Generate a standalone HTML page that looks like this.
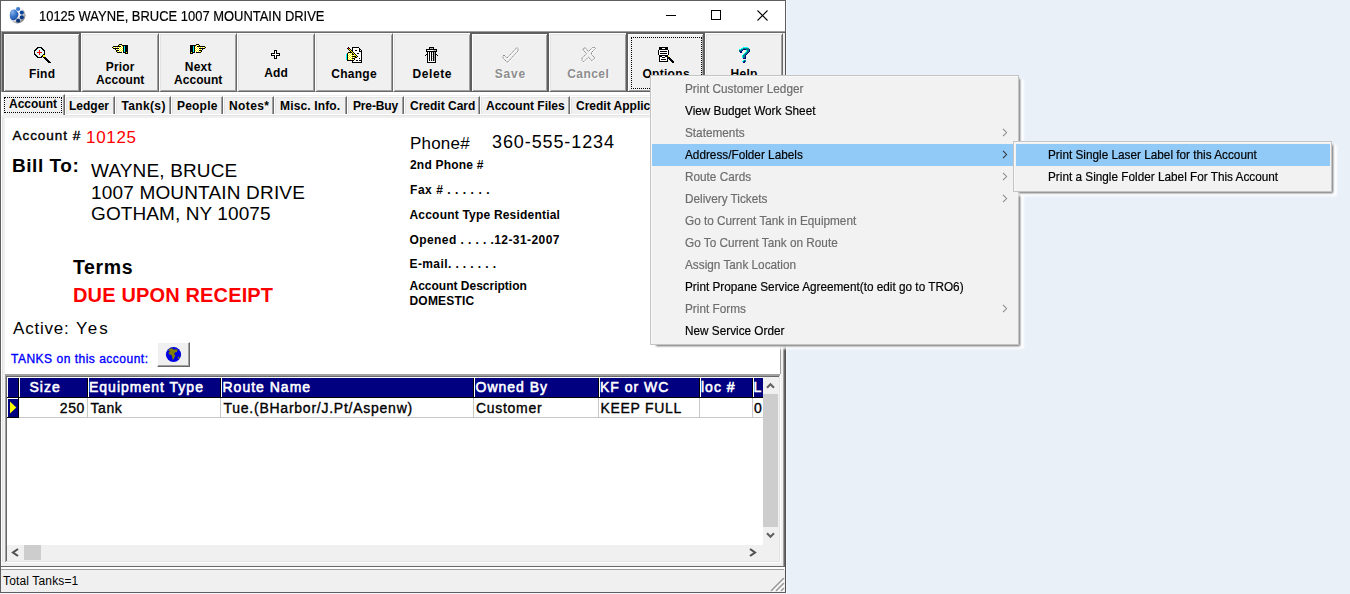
<!DOCTYPE html><html><head><meta charset="utf-8"><style>
*{margin:0;padding:0;box-sizing:border-box}
html,body{width:1350px;height:594px;overflow:hidden;background:#eaf0f8;font-family:"Liberation Sans",sans-serif}
.t{position:absolute;white-space:nowrap;font-family:"Liberation Sans",sans-serif}
.r{position:absolute}
svg{position:absolute;overflow:visible}
</style></head><body>
<div class="r" style="left:0px;top:0px;width:786px;height:593px;background:#f0f0f0;border:1px solid #5f5f5f;"></div>
<div class="r" style="left:1px;top:1px;width:784px;height:30px;background:#fff;"></div>
<div class="r" style="left:1px;top:31px;width:784px;height:1px;background:#a0a0a0;"></div>
<svg style="left:7px;top:5px" width="20" height="20" viewBox="0 0 20 20">
<defs>
<radialGradient id="gbg" cx="30%" cy="28%" r="80%"><stop offset="0" stop-color="#ffffff"/><stop offset="0.62" stop-color="#f4f4f4"/><stop offset="0.85" stop-color="#a8a8a8"/><stop offset="1" stop-color="#707070"/></radialGradient>
<radialGradient id="gbl" cx="30%" cy="25%" r="80%"><stop offset="0" stop-color="#8ab4ea"/><stop offset="0.5" stop-color="#3c78cc"/><stop offset="1" stop-color="#1a4fa6"/></radialGradient>
</defs>
<circle cx="10.3" cy="10.3" r="8.2" fill="url(#gbg)"/>
<path d="M3.2 7 C3.8 5 5.5 4.3 7.5 4.4 C9 4.6 10 5.8 11.2 8 C11.6 9.2 11.6 10.3 11.1 11.3 C10.2 13.2 9 14.8 7 15.2 C5 15.5 3.4 14.2 3 12.2 C2.8 10.5 2.8 8.8 3.2 7 Z" fill="url(#gbl)"/>
<circle cx="11.1" cy="4" r="2.1" fill="#3f7ccc"/>
<circle cx="14.8" cy="7.6" r="2.1" fill="#0e48a0"/>
<circle cx="14.8" cy="12.3" r="2.1" fill="#0b3a86"/>
<circle cx="11.1" cy="15.7" r="2.1" fill="#0d3476"/>
</svg>
<div class="t " style="left:39px;top:9.15px;font-size:14px;line-height:14px;font-weight:normal;color:#000;transform:scaleX(0.925);transform-origin:0 0;-webkit-text-stroke:0.2px #000;">10125 WAYNE, BRUCE 1007 MOUNTAIN DRIVE</div>
<div class="r" style="left:666px;top:15px;width:10px;height:1px;background:#000;"></div>
<div class="r" style="left:711px;top:10px;width:10px;height:10px;border:1px solid #000;"></div>
<svg style="left:757px;top:10px" width="11" height="11" viewBox="0 0 11 11"><path d="M0.5 0.5L10.5 10.5M10.5 0.5L0.5 10.5" stroke="#000" stroke-width="1.1"/></svg>
<div class="r" style="left:1px;top:32px;width:784px;height:1px;background:#696969;"></div>
<div class="r" style="left:1px;top:32px;width:1px;height:60px;background:#a0a0a0;"></div>
<div class="r" style="left:2px;top:32px;width:79px;height:60px;background:#f0f0f0;border-style:solid;border-color:#5f5f5f;border-width:2px 2px 1px 2px;box-shadow:inset 1px 1px #fff, inset -1px -1px #a0a0a0;"></div>
<div class="t " style="left:42.1px;top:67.84px;font-size:12px;line-height:12px;font-weight:bold;color:#000;letter-spacing:0.2px;transform:translateX(-50%);">Find</div>
<div class="r" style="left:81px;top:33px;width:78px;height:59px;background:#f0f0f0;border-style:solid;border-width:1px;border-color:#fff #696969 #696969 #fff;box-shadow:inset 1px 1px #e3e3e3, inset -1px -1px #a0a0a0;"></div>
<div class="t " style="left:120.2px;top:60.84px;font-size:12px;line-height:12px;font-weight:bold;color:#000;letter-spacing:0.2px;transform:translateX(-50%);">Prior</div>
<div class="t " style="left:120.2px;top:73.84px;font-size:12px;line-height:12px;font-weight:bold;color:#000;letter-spacing:0.05px;transform:translateX(-50%);">Account</div>
<div class="r" style="left:159px;top:33px;width:78px;height:59px;background:#f0f0f0;border-style:solid;border-width:1px;border-color:#fff #696969 #696969 #fff;box-shadow:inset 1px 1px #e3e3e3, inset -1px -1px #a0a0a0;"></div>
<div class="t " style="left:198.2px;top:60.84px;font-size:12px;line-height:12px;font-weight:bold;color:#000;letter-spacing:0.2px;transform:translateX(-50%);">Next</div>
<div class="t " style="left:198.2px;top:73.84px;font-size:12px;line-height:12px;font-weight:bold;color:#000;letter-spacing:0.05px;transform:translateX(-50%);">Account</div>
<div class="r" style="left:237px;top:33px;width:78px;height:59px;background:#f0f0f0;border-style:solid;border-width:1px;border-color:#fff #696969 #696969 #fff;box-shadow:inset 1px 1px #e3e3e3, inset -1px -1px #a0a0a0;"></div>
<div class="t " style="left:276.1px;top:66.84px;font-size:12px;line-height:12px;font-weight:bold;color:#000;letter-spacing:0.2px;transform:translateX(-50%);">Add</div>
<div class="r" style="left:315px;top:33px;width:78px;height:59px;background:#f0f0f0;border-style:solid;border-width:1px;border-color:#fff #696969 #696969 #fff;box-shadow:inset 1px 1px #e3e3e3, inset -1px -1px #a0a0a0;"></div>
<div class="t " style="left:354.125px;top:67.84px;font-size:12px;line-height:12px;font-weight:bold;color:#000;letter-spacing:0.25px;transform:translateX(-50%);">Change</div>
<div class="r" style="left:393px;top:33px;width:78px;height:59px;background:#f0f0f0;border-style:solid;border-width:1px;border-color:#fff #696969 #696969 #fff;box-shadow:inset 1px 1px #e3e3e3, inset -1px -1px #a0a0a0;"></div>
<div class="t " style="left:432.275px;top:67.84px;font-size:12px;line-height:12px;font-weight:bold;color:#000;letter-spacing:0.55px;transform:translateX(-50%);">Delete</div>
<div class="r" style="left:470px;top:32px;width:79px;height:60px;background:#f0f0f0;border-style:solid;border-color:#5f5f5f;border-width:2px 2px 1px 2px;box-shadow:inset 1px 1px #fff, inset -1px -1px #a0a0a0;"></div>
<div class="t " style="left:510.4px;top:67.84px;font-size:12px;line-height:12px;font-weight:bold;color:#8d8d8d;letter-spacing:0.8px;transform:translateX(-50%);text-shadow:1px 1px 0 #fff;">Save</div>
<div class="r" style="left:549px;top:33px;width:78px;height:59px;background:#f0f0f0;border-style:solid;border-width:1px;border-color:#fff #696969 #696969 #fff;box-shadow:inset 1px 1px #e3e3e3, inset -1px -1px #a0a0a0;"></div>
<div class="t " style="left:588.225px;top:67.84px;font-size:12px;line-height:12px;font-weight:bold;color:#8d8d8d;letter-spacing:0.45px;transform:translateX(-50%);text-shadow:1px 1px 0 #fff;">Cancel</div>
<div class="r" style="left:626px;top:32px;width:79px;height:60px;background:#f0f0f0;border-style:solid;border-color:#5f5f5f;border-width:2px 2px 1px 2px;box-shadow:inset 1px 1px #fff, inset -1px -1px #a0a0a0;"></div>
<div class="t " style="left:666.15px;top:67.84px;font-size:12px;line-height:12px;font-weight:bold;color:#000;letter-spacing:0.3px;transform:translateX(-50%);">Options</div>
<div class="r" style="left:705px;top:33px;width:78px;height:59px;background:#f0f0f0;border-style:solid;border-width:1px;border-color:#fff #696969 #696969 #fff;box-shadow:inset 1px 1px #e3e3e3, inset -1px -1px #a0a0a0;"></div>
<div class="t " style="left:744.15px;top:67.84px;font-size:12px;line-height:12px;font-weight:bold;color:#000;letter-spacing:0.3px;transform:translateX(-50%);">Help</div>
<svg style="left:32px;top:44px" width="19" height="19" shape-rendering="crispEdges"><rect x="5" y="3" width="5" height="1" fill="#000"/><rect x="4" y="4" width="2" height="1" fill="#000"/><rect x="6" y="4" width="3" height="1" fill="#dff4f4"/><rect x="9" y="4" width="2" height="1" fill="#000"/><rect x="3" y="5" width="2" height="1" fill="#000"/><rect x="5" y="5" width="5" height="1" fill="#dff4f4"/><rect x="10" y="5" width="2" height="1" fill="#000"/><rect x="2" y="6" width="2" height="1" fill="#000"/><rect x="4" y="6" width="3" height="1" fill="#dff4f4"/><rect x="7" y="6" width="1" height="1" fill="#f00"/><rect x="8" y="6" width="3" height="1" fill="#dff4f4"/><rect x="11" y="6" width="2" height="1" fill="#000"/><rect x="2" y="7" width="1" height="1" fill="#000"/><rect x="3" y="7" width="4" height="1" fill="#dff4f4"/><rect x="7" y="7" width="1" height="1" fill="#f00"/><rect x="8" y="7" width="4" height="1" fill="#dff4f4"/><rect x="12" y="7" width="1" height="1" fill="#000"/><rect x="2" y="8" width="1" height="1" fill="#000"/><rect x="3" y="8" width="2" height="1" fill="#dff4f4"/><rect x="5" y="8" width="5" height="1" fill="#f00"/><rect x="10" y="8" width="2" height="1" fill="#dff4f4"/><rect x="12" y="8" width="1" height="1" fill="#000"/><rect x="2" y="9" width="1" height="1" fill="#000"/><rect x="3" y="9" width="4" height="1" fill="#dff4f4"/><rect x="7" y="9" width="1" height="1" fill="#f00"/><rect x="8" y="9" width="4" height="1" fill="#dff4f4"/><rect x="12" y="9" width="1" height="1" fill="#000"/><rect x="2" y="10" width="2" height="1" fill="#000"/><rect x="4" y="10" width="3" height="1" fill="#dff4f4"/><rect x="7" y="10" width="1" height="1" fill="#f00"/><rect x="8" y="10" width="3" height="1" fill="#dff4f4"/><rect x="11" y="10" width="2" height="1" fill="#000"/><rect x="3" y="11" width="2" height="1" fill="#000"/><rect x="5" y="11" width="5" height="1" fill="#dff4f4"/><rect x="10" y="11" width="1" height="1" fill="#000"/><rect x="11" y="11" width="2" height="1" fill="#ff0"/><rect x="4" y="12" width="2" height="1" fill="#000"/><rect x="6" y="12" width="3" height="1" fill="#dff4f4"/><rect x="9" y="12" width="2" height="1" fill="#000"/><rect x="11" y="12" width="2" height="1" fill="#ff0"/><rect x="5" y="13" width="5" height="1" fill="#000"/><rect x="11" y="13" width="3" height="1" fill="#000"/><rect x="12" y="14" width="3" height="1" fill="#000"/><rect x="13" y="15" width="3" height="1" fill="#000"/><rect x="14" y="16" width="3" height="1" fill="#000"/><rect x="15" y="17" width="3" height="1" fill="#000"/><rect x="16" y="18" width="3" height="1" fill="#000"/></svg>
<svg style="left:110px;top:42px" width="18" height="12" shape-rendering="crispEdges"><rect x="9" y="2" width="3" height="1" fill="#000"/><rect x="8" y="3" width="1" height="1" fill="#000"/><rect x="9" y="3" width="1" height="1" fill="#ff0"/><rect x="10" y="3" width="1" height="1" fill="#fff"/><rect x="11" y="3" width="1" height="1" fill="#ff0"/><rect x="12" y="3" width="6" height="1" fill="#000"/><rect x="3" y="4" width="8" height="1" fill="#000"/><rect x="11" y="4" width="1" height="1" fill="#fff"/><rect x="12" y="4" width="1" height="1" fill="#ff0"/><rect x="13" y="4" width="1" height="1" fill="#000"/><rect x="14" y="4" width="1" height="1" fill="#0ff"/><rect x="15" y="4" width="3" height="1" fill="#000"/><rect x="2" y="5" width="1" height="1" fill="#000"/><rect x="3" y="5" width="1" height="1" fill="#ff0"/><rect x="4" y="5" width="1" height="1" fill="#fff"/><rect x="5" y="5" width="1" height="1" fill="#ff0"/><rect x="6" y="5" width="1" height="1" fill="#fff"/><rect x="7" y="5" width="1" height="1" fill="#ff0"/><rect x="8" y="5" width="1" height="1" fill="#fff"/><rect x="9" y="5" width="1" height="1" fill="#ff0"/><rect x="10" y="5" width="1" height="1" fill="#fff"/><rect x="11" y="5" width="1" height="1" fill="#ff0"/><rect x="12" y="5" width="1" height="1" fill="#fff"/><rect x="13" y="5" width="1" height="1" fill="#000"/><rect x="14" y="5" width="1" height="1" fill="#0ff"/><rect x="15" y="5" width="3" height="1" fill="#000"/><rect x="3" y="6" width="6" height="1" fill="#000"/><rect x="9" y="6" width="1" height="1" fill="#fff"/><rect x="10" y="6" width="1" height="1" fill="#ff0"/><rect x="11" y="6" width="1" height="1" fill="#fff"/><rect x="12" y="6" width="1" height="1" fill="#ff0"/><rect x="13" y="6" width="1" height="1" fill="#000"/><rect x="14" y="6" width="1" height="1" fill="#0ff"/><rect x="15" y="6" width="3" height="1" fill="#000"/><rect x="5" y="7" width="1" height="1" fill="#000"/><rect x="6" y="7" width="1" height="1" fill="#fff"/><rect x="7" y="7" width="1" height="1" fill="#ff0"/><rect x="8" y="7" width="1" height="1" fill="#fff"/><rect x="9" y="7" width="1" height="1" fill="#ff0"/><rect x="10" y="7" width="1" height="1" fill="#fff"/><rect x="11" y="7" width="1" height="1" fill="#ff0"/><rect x="12" y="7" width="1" height="1" fill="#fff"/><rect x="13" y="7" width="1" height="1" fill="#000"/><rect x="14" y="7" width="1" height="1" fill="#0ff"/><rect x="15" y="7" width="3" height="1" fill="#000"/><rect x="6" y="8" width="3" height="1" fill="#000"/><rect x="9" y="8" width="1" height="1" fill="#fff"/><rect x="10" y="8" width="1" height="1" fill="#ff0"/><rect x="11" y="8" width="1" height="1" fill="#fff"/><rect x="12" y="8" width="1" height="1" fill="#ff0"/><rect x="13" y="8" width="1" height="1" fill="#000"/><rect x="14" y="8" width="1" height="1" fill="#0ff"/><rect x="15" y="8" width="3" height="1" fill="#000"/><rect x="6" y="9" width="1" height="1" fill="#000"/><rect x="7" y="9" width="1" height="1" fill="#ff0"/><rect x="8" y="9" width="1" height="1" fill="#fff"/><rect x="9" y="9" width="1" height="1" fill="#ff0"/><rect x="10" y="9" width="1" height="1" fill="#fff"/><rect x="11" y="9" width="1" height="1" fill="#ff0"/><rect x="12" y="9" width="1" height="1" fill="#fff"/><rect x="13" y="9" width="1" height="1" fill="#000"/><rect x="14" y="9" width="1" height="1" fill="#0ff"/><rect x="15" y="9" width="3" height="1" fill="#000"/><rect x="7" y="10" width="5" height="1" fill="#000"/><rect x="13" y="10" width="3" height="1" fill="#000"/><rect x="16" y="10" width="1" height="1" fill="#ff0"/><rect x="17" y="10" width="1" height="1" fill="#000"/><rect x="15" y="11" width="3" height="1" fill="#000"/></svg>
<svg style="left:190px;top:42px" width="18" height="12" shape-rendering="crispEdges"><rect x="6" y="2" width="3" height="1" fill="#000"/><rect x="9" y="3" width="1" height="1" fill="#000"/><rect x="8" y="3" width="1" height="1" fill="#ff0"/><rect x="7" y="3" width="1" height="1" fill="#fff"/><rect x="6" y="3" width="1" height="1" fill="#ff0"/><rect x="0" y="3" width="6" height="1" fill="#000"/><rect x="7" y="4" width="8" height="1" fill="#000"/><rect x="6" y="4" width="1" height="1" fill="#fff"/><rect x="5" y="4" width="1" height="1" fill="#ff0"/><rect x="4" y="4" width="1" height="1" fill="#000"/><rect x="3" y="4" width="1" height="1" fill="#0ff"/><rect x="0" y="4" width="3" height="1" fill="#000"/><rect x="15" y="5" width="1" height="1" fill="#000"/><rect x="14" y="5" width="1" height="1" fill="#ff0"/><rect x="13" y="5" width="1" height="1" fill="#fff"/><rect x="12" y="5" width="1" height="1" fill="#ff0"/><rect x="11" y="5" width="1" height="1" fill="#fff"/><rect x="10" y="5" width="1" height="1" fill="#ff0"/><rect x="9" y="5" width="1" height="1" fill="#fff"/><rect x="8" y="5" width="1" height="1" fill="#ff0"/><rect x="7" y="5" width="1" height="1" fill="#fff"/><rect x="6" y="5" width="1" height="1" fill="#ff0"/><rect x="5" y="5" width="1" height="1" fill="#fff"/><rect x="4" y="5" width="1" height="1" fill="#000"/><rect x="3" y="5" width="1" height="1" fill="#0ff"/><rect x="0" y="5" width="3" height="1" fill="#000"/><rect x="9" y="6" width="6" height="1" fill="#000"/><rect x="8" y="6" width="1" height="1" fill="#fff"/><rect x="7" y="6" width="1" height="1" fill="#ff0"/><rect x="6" y="6" width="1" height="1" fill="#fff"/><rect x="5" y="6" width="1" height="1" fill="#ff0"/><rect x="4" y="6" width="1" height="1" fill="#000"/><rect x="3" y="6" width="1" height="1" fill="#0ff"/><rect x="0" y="6" width="3" height="1" fill="#000"/><rect x="12" y="7" width="1" height="1" fill="#000"/><rect x="11" y="7" width="1" height="1" fill="#fff"/><rect x="10" y="7" width="1" height="1" fill="#ff0"/><rect x="9" y="7" width="1" height="1" fill="#fff"/><rect x="8" y="7" width="1" height="1" fill="#ff0"/><rect x="7" y="7" width="1" height="1" fill="#fff"/><rect x="6" y="7" width="1" height="1" fill="#ff0"/><rect x="5" y="7" width="1" height="1" fill="#fff"/><rect x="4" y="7" width="1" height="1" fill="#000"/><rect x="3" y="7" width="1" height="1" fill="#0ff"/><rect x="0" y="7" width="3" height="1" fill="#000"/><rect x="9" y="8" width="3" height="1" fill="#000"/><rect x="8" y="8" width="1" height="1" fill="#fff"/><rect x="7" y="8" width="1" height="1" fill="#ff0"/><rect x="6" y="8" width="1" height="1" fill="#fff"/><rect x="5" y="8" width="1" height="1" fill="#ff0"/><rect x="4" y="8" width="1" height="1" fill="#000"/><rect x="3" y="8" width="1" height="1" fill="#0ff"/><rect x="0" y="8" width="3" height="1" fill="#000"/><rect x="11" y="9" width="1" height="1" fill="#000"/><rect x="10" y="9" width="1" height="1" fill="#ff0"/><rect x="9" y="9" width="1" height="1" fill="#fff"/><rect x="8" y="9" width="1" height="1" fill="#ff0"/><rect x="7" y="9" width="1" height="1" fill="#fff"/><rect x="6" y="9" width="1" height="1" fill="#ff0"/><rect x="5" y="9" width="1" height="1" fill="#fff"/><rect x="4" y="9" width="1" height="1" fill="#000"/><rect x="3" y="9" width="1" height="1" fill="#0ff"/><rect x="0" y="9" width="3" height="1" fill="#000"/><rect x="6" y="10" width="5" height="1" fill="#000"/><rect x="2" y="10" width="3" height="1" fill="#000"/><rect x="1" y="10" width="1" height="1" fill="#ff0"/><rect x="0" y="10" width="1" height="1" fill="#000"/><rect x="0" y="11" width="3" height="1" fill="#000"/></svg>
<svg style="left:271px;top:50px" width="9" height="9" shape-rendering="crispEdges"><rect x="3" y="0" width="3" height="1" fill="#000"/><rect x="3" y="1" width="1" height="1" fill="#000"/><rect x="4" y="1" width="1" height="1" fill="#fff"/><rect x="5" y="1" width="1" height="1" fill="#000"/><rect x="3" y="2" width="1" height="1" fill="#000"/><rect x="4" y="2" width="1" height="1" fill="#fff"/><rect x="5" y="2" width="1" height="1" fill="#000"/><rect x="0" y="3" width="4" height="1" fill="#000"/><rect x="4" y="3" width="1" height="1" fill="#fff"/><rect x="5" y="3" width="4" height="1" fill="#000"/><rect x="0" y="4" width="1" height="1" fill="#000"/><rect x="1" y="4" width="7" height="1" fill="#fff"/><rect x="8" y="4" width="1" height="1" fill="#000"/><rect x="0" y="5" width="4" height="1" fill="#000"/><rect x="4" y="5" width="1" height="1" fill="#fff"/><rect x="5" y="5" width="4" height="1" fill="#000"/><rect x="3" y="6" width="1" height="1" fill="#000"/><rect x="4" y="6" width="1" height="1" fill="#fff"/><rect x="5" y="6" width="1" height="1" fill="#000"/><rect x="3" y="7" width="1" height="1" fill="#000"/><rect x="4" y="7" width="1" height="1" fill="#fff"/><rect x="5" y="7" width="1" height="1" fill="#000"/><rect x="3" y="8" width="3" height="1" fill="#000"/></svg>
<svg style="left:344px;top:45px" width="19" height="18" shape-rendering="crispEdges"><rect x="4" y="2" width="1" height="1" fill="#000"/><rect x="8" y="2" width="7" height="1" fill="#000"/><rect x="3" y="3" width="1" height="1" fill="#000"/><rect x="4" y="3" width="1" height="1" fill="#f00"/><rect x="5" y="3" width="1" height="1" fill="#000"/><rect x="8" y="3" width="1" height="1" fill="#000"/><rect x="9" y="3" width="6" height="1" fill="#fff"/><rect x="15" y="3" width="1" height="1" fill="#000"/><rect x="4" y="4" width="1" height="1" fill="#000"/><rect x="5" y="4" width="1" height="1" fill="#ff0"/><rect x="6" y="4" width="1" height="1" fill="#000"/><rect x="8" y="4" width="1" height="1" fill="#000"/><rect x="9" y="4" width="6" height="1" fill="#fff"/><rect x="15" y="4" width="2" height="1" fill="#000"/><rect x="5" y="5" width="1" height="1" fill="#000"/><rect x="6" y="5" width="1" height="1" fill="#ff0"/><rect x="7" y="5" width="2" height="1" fill="#000"/><rect x="9" y="5" width="2" height="1" fill="#fff"/><rect x="11" y="5" width="2" height="1" fill="#000"/><rect x="13" y="5" width="2" height="1" fill="#fff"/><rect x="15" y="5" width="1" height="1" fill="#000"/><rect x="16" y="5" width="1" height="1" fill="#fff"/><rect x="17" y="5" width="1" height="1" fill="#000"/><rect x="6" y="6" width="1" height="1" fill="#000"/><rect x="7" y="6" width="1" height="1" fill="#ff0"/><rect x="8" y="6" width="1" height="1" fill="#000"/><rect x="9" y="6" width="6" height="1" fill="#fff"/><rect x="15" y="6" width="3" height="1" fill="#000"/><rect x="4" y="7" width="4" height="1" fill="#000"/><rect x="8" y="7" width="1" height="1" fill="#ff0"/><rect x="9" y="7" width="1" height="1" fill="#000"/><rect x="10" y="7" width="7" height="1" fill="#fff"/><rect x="17" y="7" width="1" height="1" fill="#000"/><rect x="3" y="8" width="1" height="1" fill="#000"/><rect x="4" y="8" width="1" height="1" fill="#ff0"/><rect x="5" y="8" width="1" height="1" fill="#fff"/><rect x="6" y="8" width="1" height="1" fill="#ff0"/><rect x="7" y="8" width="1" height="1" fill="#fff"/><rect x="8" y="8" width="1" height="1" fill="#000"/><rect x="9" y="8" width="1" height="1" fill="#ff0"/><rect x="10" y="8" width="1" height="1" fill="#000"/><rect x="11" y="8" width="2" height="1" fill="#fff"/><rect x="13" y="8" width="2" height="1" fill="#000"/><rect x="15" y="8" width="2" height="1" fill="#fff"/><rect x="17" y="8" width="1" height="1" fill="#000"/><rect x="2" y="9" width="1" height="1" fill="#0ff"/><rect x="3" y="9" width="1" height="1" fill="#000"/><rect x="4" y="9" width="1" height="1" fill="#fff"/><rect x="5" y="9" width="1" height="1" fill="#ff0"/><rect x="6" y="9" width="1" height="1" fill="#fff"/><rect x="7" y="9" width="1" height="1" fill="#ff0"/><rect x="8" y="9" width="2" height="1" fill="#000"/><rect x="10" y="9" width="1" height="1" fill="#ff0"/><rect x="11" y="9" width="1" height="1" fill="#000"/><rect x="12" y="9" width="5" height="1" fill="#fff"/><rect x="17" y="9" width="1" height="1" fill="#000"/><rect x="2" y="10" width="1" height="1" fill="#0ff"/><rect x="3" y="10" width="1" height="1" fill="#000"/><rect x="4" y="10" width="1" height="1" fill="#ff0"/><rect x="5" y="10" width="1" height="1" fill="#fff"/><rect x="6" y="10" width="1" height="1" fill="#ff0"/><rect x="7" y="10" width="1" height="1" fill="#fff"/><rect x="8" y="10" width="1" height="1" fill="#ff0"/><rect x="9" y="10" width="1" height="1" fill="#fff"/><rect x="10" y="10" width="1" height="1" fill="#ff0"/><rect x="11" y="10" width="1" height="1" fill="#ff0"/><rect x="12" y="10" width="1" height="1" fill="#000"/><rect x="13" y="10" width="4" height="1" fill="#fff"/><rect x="17" y="10" width="1" height="1" fill="#000"/><rect x="2" y="11" width="1" height="1" fill="#0ff"/><rect x="3" y="11" width="1" height="1" fill="#000"/><rect x="4" y="11" width="1" height="1" fill="#fff"/><rect x="5" y="11" width="1" height="1" fill="#ff0"/><rect x="6" y="11" width="1" height="1" fill="#fff"/><rect x="7" y="11" width="1" height="1" fill="#ff0"/><rect x="8" y="11" width="4" height="1" fill="#000"/><rect x="12" y="11" width="1" height="1" fill="#ff0"/><rect x="13" y="11" width="1" height="1" fill="#000"/><rect x="14" y="11" width="3" height="1" fill="#fff"/><rect x="17" y="11" width="1" height="1" fill="#000"/><rect x="2" y="12" width="1" height="1" fill="#0ff"/><rect x="3" y="12" width="1" height="1" fill="#000"/><rect x="4" y="12" width="1" height="1" fill="#ff0"/><rect x="5" y="12" width="1" height="1" fill="#fff"/><rect x="6" y="12" width="1" height="1" fill="#ff0"/><rect x="7" y="12" width="1" height="1" fill="#fff"/><rect x="8" y="12" width="1" height="1" fill="#ff0"/><rect x="9" y="12" width="1" height="1" fill="#fff"/><rect x="10" y="12" width="1" height="1" fill="#ff0"/><rect x="11" y="12" width="2" height="1" fill="#000"/><rect x="13" y="12" width="4" height="1" fill="#fff"/><rect x="17" y="12" width="1" height="1" fill="#000"/><rect x="2" y="13" width="1" height="1" fill="#0ff"/><rect x="3" y="13" width="1" height="1" fill="#000"/><rect x="4" y="13" width="1" height="1" fill="#fff"/><rect x="5" y="13" width="1" height="1" fill="#ff0"/><rect x="6" y="13" width="1" height="1" fill="#fff"/><rect x="7" y="13" width="1" height="1" fill="#ff0"/><rect x="8" y="13" width="3" height="1" fill="#000"/><rect x="11" y="13" width="4" height="1" fill="#fff"/><rect x="15" y="13" width="1" height="1" fill="#000"/><rect x="16" y="13" width="1" height="1" fill="#fff"/><rect x="17" y="13" width="1" height="1" fill="#000"/><rect x="2" y="14" width="1" height="1" fill="#0ff"/><rect x="3" y="14" width="1" height="1" fill="#000"/><rect x="4" y="14" width="1" height="1" fill="#ff0"/><rect x="5" y="14" width="1" height="1" fill="#fff"/><rect x="6" y="14" width="1" height="1" fill="#ff0"/><rect x="7" y="14" width="1" height="1" fill="#fff"/><rect x="8" y="14" width="1" height="1" fill="#ff0"/><rect x="9" y="14" width="1" height="1" fill="#fff"/><rect x="10" y="14" width="1" height="1" fill="#000"/><rect x="11" y="14" width="6" height="1" fill="#fff"/><rect x="17" y="14" width="1" height="1" fill="#000"/><rect x="3" y="15" width="7" height="1" fill="#000"/><rect x="10" y="15" width="2" height="1" fill="#fff"/><rect x="12" y="15" width="2" height="1" fill="#000"/><rect x="14" y="15" width="1" height="1" fill="#fff"/><rect x="15" y="15" width="3" height="1" fill="#000"/><rect x="8" y="16" width="1" height="1" fill="#000"/><rect x="9" y="16" width="8" height="1" fill="#fff"/><rect x="17" y="16" width="1" height="1" fill="#000"/><rect x="8" y="17" width="10" height="1" fill="#000"/></svg>
<svg style="left:421px;top:44px" width="20" height="19" shape-rendering="crispEdges"><rect x="8" y="3" width="5" height="1" fill="#000"/><rect x="8" y="4" width="1" height="1" fill="#000"/><rect x="9" y="4" width="1" height="1" fill="#c8c8c8"/><rect x="10" y="4" width="1" height="1" fill="#a0a0a0"/><rect x="11" y="4" width="1" height="1" fill="#c8c8c8"/><rect x="12" y="4" width="1" height="1" fill="#000"/><rect x="5" y="5" width="11" height="1" fill="#000"/><rect x="5" y="6" width="1" height="1" fill="#000"/><rect x="6" y="6" width="6" height="1" fill="#fff"/><rect x="12" y="6" width="1" height="1" fill="#c8c8c8"/><rect x="13" y="6" width="1" height="1" fill="#a0a0a0"/><rect x="14" y="6" width="1" height="1" fill="#c8c8c8"/><rect x="15" y="6" width="1" height="1" fill="#000"/><rect x="5" y="7" width="11" height="1" fill="#000"/><rect x="6" y="8" width="1" height="1" fill="#000"/><rect x="7" y="8" width="1" height="1" fill="#fff"/><rect x="8" y="8" width="1" height="1" fill="#000"/><rect x="9" y="8" width="1" height="1" fill="#fff"/><rect x="10" y="8" width="1" height="1" fill="#000"/><rect x="11" y="8" width="1" height="1" fill="#c8c8c8"/><rect x="12" y="8" width="1" height="1" fill="#000"/><rect x="13" y="8" width="1" height="1" fill="#a0a0a0"/><rect x="14" y="8" width="1" height="1" fill="#000"/><rect x="6" y="9" width="1" height="1" fill="#000"/><rect x="7" y="9" width="1" height="1" fill="#fff"/><rect x="8" y="9" width="1" height="1" fill="#000"/><rect x="9" y="9" width="1" height="1" fill="#fff"/><rect x="10" y="9" width="1" height="1" fill="#000"/><rect x="11" y="9" width="1" height="1" fill="#fff"/><rect x="12" y="9" width="1" height="1" fill="#000"/><rect x="13" y="9" width="1" height="1" fill="#a0a0a0"/><rect x="14" y="9" width="1" height="1" fill="#000"/><rect x="5" y="10" width="2" height="1" fill="#000"/><rect x="7" y="10" width="1" height="1" fill="#fff"/><rect x="8" y="10" width="1" height="1" fill="#000"/><rect x="9" y="10" width="1" height="1" fill="#fff"/><rect x="10" y="10" width="1" height="1" fill="#000"/><rect x="11" y="10" width="1" height="1" fill="#c8c8c8"/><rect x="12" y="10" width="1" height="1" fill="#000"/><rect x="13" y="10" width="1" height="1" fill="#a0a0a0"/><rect x="14" y="10" width="2" height="1" fill="#000"/><rect x="4" y="11" width="1" height="1" fill="#000"/><rect x="6" y="11" width="1" height="1" fill="#000"/><rect x="7" y="11" width="1" height="1" fill="#fff"/><rect x="8" y="11" width="1" height="1" fill="#000"/><rect x="9" y="11" width="1" height="1" fill="#fff"/><rect x="10" y="11" width="1" height="1" fill="#000"/><rect x="11" y="11" width="1" height="1" fill="#fff"/><rect x="12" y="11" width="1" height="1" fill="#000"/><rect x="13" y="11" width="1" height="1" fill="#a0a0a0"/><rect x="14" y="11" width="1" height="1" fill="#000"/><rect x="16" y="11" width="1" height="1" fill="#000"/><rect x="6" y="12" width="1" height="1" fill="#000"/><rect x="7" y="12" width="1" height="1" fill="#fff"/><rect x="8" y="12" width="1" height="1" fill="#000"/><rect x="9" y="12" width="1" height="1" fill="#fff"/><rect x="10" y="12" width="1" height="1" fill="#000"/><rect x="11" y="12" width="1" height="1" fill="#c8c8c8"/><rect x="12" y="12" width="1" height="1" fill="#000"/><rect x="13" y="12" width="1" height="1" fill="#a0a0a0"/><rect x="14" y="12" width="1" height="1" fill="#000"/><rect x="6" y="13" width="1" height="1" fill="#000"/><rect x="7" y="13" width="1" height="1" fill="#fff"/><rect x="8" y="13" width="1" height="1" fill="#000"/><rect x="9" y="13" width="1" height="1" fill="#fff"/><rect x="10" y="13" width="1" height="1" fill="#000"/><rect x="11" y="13" width="1" height="1" fill="#fff"/><rect x="12" y="13" width="1" height="1" fill="#000"/><rect x="13" y="13" width="1" height="1" fill="#a0a0a0"/><rect x="14" y="13" width="1" height="1" fill="#000"/><rect x="6" y="14" width="1" height="1" fill="#000"/><rect x="7" y="14" width="1" height="1" fill="#fff"/><rect x="8" y="14" width="1" height="1" fill="#000"/><rect x="9" y="14" width="1" height="1" fill="#fff"/><rect x="10" y="14" width="1" height="1" fill="#000"/><rect x="11" y="14" width="1" height="1" fill="#c8c8c8"/><rect x="12" y="14" width="1" height="1" fill="#000"/><rect x="13" y="14" width="1" height="1" fill="#a0a0a0"/><rect x="14" y="14" width="1" height="1" fill="#000"/><rect x="6" y="15" width="1" height="1" fill="#000"/><rect x="7" y="15" width="1" height="1" fill="#fff"/><rect x="8" y="15" width="1" height="1" fill="#000"/><rect x="9" y="15" width="1" height="1" fill="#fff"/><rect x="10" y="15" width="1" height="1" fill="#000"/><rect x="11" y="15" width="1" height="1" fill="#fff"/><rect x="12" y="15" width="1" height="1" fill="#000"/><rect x="13" y="15" width="1" height="1" fill="#a0a0a0"/><rect x="14" y="15" width="1" height="1" fill="#000"/><rect x="6" y="16" width="1" height="1" fill="#000"/><rect x="7" y="16" width="1" height="1" fill="#fff"/><rect x="8" y="16" width="1" height="1" fill="#000"/><rect x="9" y="16" width="1" height="1" fill="#fff"/><rect x="10" y="16" width="1" height="1" fill="#000"/><rect x="11" y="16" width="1" height="1" fill="#c8c8c8"/><rect x="12" y="16" width="1" height="1" fill="#000"/><rect x="13" y="16" width="1" height="1" fill="#a0a0a0"/><rect x="14" y="16" width="1" height="1" fill="#000"/><rect x="6" y="17" width="1" height="1" fill="#000"/><rect x="7" y="17" width="7" height="1" fill="#fff"/><rect x="14" y="17" width="1" height="1" fill="#000"/><rect x="6" y="18" width="9" height="1" fill="#000"/></svg>
<svg style="left:500px;top:45px" width="20" height="20" viewBox="0 0 20 20"><path d="M4 10 L3 11 L3 13 L7 17 L8 17 L12 12.5 L18 6 L18 3.5 L17 2.5 L7 13 Z" fill="none" stroke="#fff" stroke-width="1" transform="translate(0.7,0.7)"/><path d="M4 10 L3 11 L3 13 L7 17 L8 17 L12 12.5 L18 6 L18 3.5 L17 2.5 L7 13 Z" fill="none" stroke="#858585" stroke-width="0.95" stroke-dasharray="1.6 0.5"/></svg>
<svg style="left:579px;top:45px" width="20" height="20" viewBox="0 0 20 20"><path d="M5 3 L6.5 3 L9.5 6.5 L13.5 2.5 L16 2.5 L16.5 3.5 L12.5 7.5 L12.5 9.5 L15.5 12.5 L15.5 13.5 L13 15.5 L12.5 15.5 L9.5 12 L5 16.5 L4 16.5 L3 15.5 L3 13 L7.5 9 L7.5 8.5 L4 5 L4 4 Z" fill="none" stroke="#fff" stroke-width="1" transform="translate(0.7,0.7)"/><path d="M5 3 L6.5 3 L9.5 6.5 L13.5 2.5 L16 2.5 L16.5 3.5 L12.5 7.5 L12.5 9.5 L15.5 12.5 L15.5 13.5 L13 15.5 L12.5 15.5 L9.5 12 L5 16.5 L4 16.5 L3 15.5 L3 13 L7.5 9 L7.5 8.5 L4 5 L4 4 Z" fill="none" stroke="#858585" stroke-width="0.95" stroke-dasharray="1.6 0.5"/></svg>
<svg style="left:655px;top:44px" width="19" height="19" shape-rendering="crispEdges"><rect x="4" y="3" width="9" height="1" fill="#000"/><rect x="4" y="4" width="3" height="1" fill="#000"/><rect x="7" y="4" width="3" height="1" fill="#fff"/><rect x="10" y="4" width="3" height="1" fill="#000"/><rect x="4" y="5" width="9" height="1" fill="#000"/><rect x="3" y="6" width="1" height="1" fill="#000"/><rect x="4" y="6" width="9" height="1" fill="#fff"/><rect x="13" y="6" width="1" height="1" fill="#000"/><rect x="3" y="7" width="1" height="1" fill="#000"/><rect x="4" y="7" width="1" height="1" fill="#fff"/><rect x="5" y="7" width="7" height="1" fill="#000"/><rect x="12" y="7" width="1" height="1" fill="#fff"/><rect x="13" y="7" width="1" height="1" fill="#000"/><rect x="3" y="8" width="1" height="1" fill="#000"/><rect x="4" y="8" width="9" height="1" fill="#fff"/><rect x="13" y="8" width="1" height="1" fill="#000"/><rect x="3" y="9" width="1" height="1" fill="#000"/><rect x="4" y="9" width="1" height="1" fill="#fff"/><rect x="5" y="9" width="7" height="1" fill="#000"/><rect x="12" y="9" width="1" height="1" fill="#fff"/><rect x="13" y="9" width="1" height="1" fill="#000"/><rect x="3" y="10" width="1" height="1" fill="#000"/><rect x="4" y="10" width="9" height="1" fill="#fff"/><rect x="13" y="10" width="1" height="1" fill="#000"/><rect x="4" y="11" width="9" height="1" fill="#000"/><rect x="4" y="12" width="3" height="1" fill="#000"/><rect x="7" y="12" width="3" height="1" fill="#fff"/><rect x="10" y="12" width="3" height="1" fill="#000"/><rect x="13" y="12" width="1" height="1" fill="#ff0"/><rect x="4" y="13" width="1" height="1" fill="#000"/><rect x="5" y="13" width="2" height="1" fill="#fff"/><rect x="7" y="13" width="3" height="1" fill="#000"/><rect x="10" y="13" width="2" height="1" fill="#fff"/><rect x="12" y="13" width="3" height="1" fill="#000"/><rect x="4" y="14" width="1" height="1" fill="#000"/><rect x="5" y="14" width="7" height="1" fill="#fff"/><rect x="12" y="14" width="4" height="1" fill="#000"/><rect x="4" y="15" width="1" height="1" fill="#000"/><rect x="5" y="15" width="1" height="1" fill="#fff"/><rect x="6" y="15" width="5" height="1" fill="#000"/><rect x="11" y="15" width="1" height="1" fill="#fff"/><rect x="12" y="15" width="1" height="1" fill="#000"/><rect x="14" y="15" width="3" height="1" fill="#000"/><rect x="4" y="16" width="1" height="1" fill="#000"/><rect x="5" y="16" width="7" height="1" fill="#fff"/><rect x="12" y="16" width="1" height="1" fill="#000"/><rect x="15" y="16" width="3" height="1" fill="#000"/><rect x="4" y="17" width="9" height="1" fill="#000"/><rect x="16" y="17" width="3" height="1" fill="#000"/><rect x="17" y="18" width="2" height="1" fill="#000"/></svg>
<svg style="left:738px;top:46px" width="13" height="17" shape-rendering="crispEdges"><rect x="5" y="1" width="5" height="1" fill="#0ff"/><rect x="3" y="2" width="2" height="1" fill="#0ff"/><rect x="5" y="2" width="6" height="1" fill="#008080"/><rect x="1" y="3" width="2" height="1" fill="#0ff"/><rect x="3" y="3" width="2" height="1" fill="#008080"/><rect x="5" y="3" width="3" height="1" fill="#000080"/><rect x="8" y="3" width="3" height="1" fill="#008080"/><rect x="11" y="3" width="1" height="1" fill="#000080"/><rect x="1" y="4" width="3" height="1" fill="#008080"/><rect x="4" y="4" width="1" height="1" fill="#000080"/><rect x="8" y="4" width="1" height="1" fill="#0ff"/><rect x="9" y="4" width="2" height="1" fill="#008080"/><rect x="11" y="4" width="1" height="1" fill="#000080"/><rect x="1" y="5" width="1" height="1" fill="#008080"/><rect x="2" y="5" width="2" height="1" fill="#000080"/><rect x="8" y="5" width="1" height="1" fill="#0ff"/><rect x="9" y="5" width="2" height="1" fill="#008080"/><rect x="11" y="5" width="1" height="1" fill="#000080"/><rect x="2" y="6" width="2" height="1" fill="#000080"/><rect x="7" y="6" width="1" height="1" fill="#0ff"/><rect x="8" y="6" width="2" height="1" fill="#008080"/><rect x="10" y="6" width="1" height="1" fill="#000080"/><rect x="6" y="7" width="1" height="1" fill="#0ff"/><rect x="7" y="7" width="2" height="1" fill="#008080"/><rect x="9" y="7" width="1" height="1" fill="#000080"/><rect x="5" y="8" width="1" height="1" fill="#0ff"/><rect x="6" y="8" width="2" height="1" fill="#008080"/><rect x="8" y="8" width="1" height="1" fill="#000080"/><rect x="4" y="9" width="1" height="1" fill="#0ff"/><rect x="5" y="9" width="2" height="1" fill="#008080"/><rect x="7" y="9" width="1" height="1" fill="#000080"/><rect x="4" y="10" width="1" height="1" fill="#0ff"/><rect x="5" y="10" width="2" height="1" fill="#008080"/><rect x="7" y="10" width="1" height="1" fill="#000080"/><rect x="4" y="11" width="1" height="1" fill="#0ff"/><rect x="5" y="11" width="2" height="1" fill="#008080"/><rect x="7" y="11" width="1" height="1" fill="#000080"/><rect x="5" y="12" width="3" height="1" fill="#000080"/><rect x="5" y="14" width="1" height="1" fill="#0ff"/><rect x="6" y="14" width="2" height="1" fill="#008080"/><rect x="4" y="15" width="1" height="1" fill="#0ff"/><rect x="5" y="15" width="1" height="1" fill="#008080"/><rect x="6" y="15" width="1" height="1" fill="#000080"/><rect x="7" y="15" width="1" height="1" fill="#008080"/><rect x="5" y="16" width="2" height="1" fill="#000080"/></svg>
<div class="r" style="left:631px;top:37px;width:71px;height:52px;border:1px dotted #000;"></div>
<div class="r" style="left:1px;top:92px;width:784px;height:26px;background:#f0f0f0;"></div>
<div class="r" style="left:1px;top:92px;width:782px;height:3px;background:#fff;"></div>
<div class="r" style="left:2px;top:94px;width:63px;height:21px;background:#f0f0f0;border-style:solid;border-width:1px 1px 0 1px;border-color:#fff #696969 #fff #fff;box-shadow:inset -1px 0 #a0a0a0;"></div>
<div class="r" style="left:65px;top:96px;width:50px;height:18px;background:#f0f0f0;border-style:solid;border-width:1px 1px 0 1px;border-color:#fff #696969 #fff #fff;box-shadow:inset -1px 0 #a0a0a0, inset 1px 1px #e3e3e3;"></div>
<div class="r" style="left:115px;top:96px;width:56px;height:18px;background:#f0f0f0;border-style:solid;border-width:1px 1px 0 1px;border-color:#fff #696969 #fff #fff;box-shadow:inset -1px 0 #a0a0a0, inset 1px 1px #e3e3e3;"></div>
<div class="r" style="left:171px;top:96px;width:52px;height:18px;background:#f0f0f0;border-style:solid;border-width:1px 1px 0 1px;border-color:#fff #696969 #fff #fff;box-shadow:inset -1px 0 #a0a0a0, inset 1px 1px #e3e3e3;"></div>
<div class="r" style="left:223px;top:96px;width:51px;height:18px;background:#f0f0f0;border-style:solid;border-width:1px 1px 0 1px;border-color:#fff #696969 #fff #fff;box-shadow:inset -1px 0 #a0a0a0, inset 1px 1px #e3e3e3;"></div>
<div class="r" style="left:274px;top:96px;width:73px;height:18px;background:#f0f0f0;border-style:solid;border-width:1px 1px 0 1px;border-color:#fff #696969 #fff #fff;box-shadow:inset -1px 0 #a0a0a0, inset 1px 1px #e3e3e3;"></div>
<div class="r" style="left:347px;top:96px;width:57px;height:18px;background:#f0f0f0;border-style:solid;border-width:1px 1px 0 1px;border-color:#fff #696969 #fff #fff;box-shadow:inset -1px 0 #a0a0a0, inset 1px 1px #e3e3e3;"></div>
<div class="r" style="left:404px;top:96px;width:76px;height:18px;background:#f0f0f0;border-style:solid;border-width:1px 1px 0 1px;border-color:#fff #696969 #fff #fff;box-shadow:inset -1px 0 #a0a0a0, inset 1px 1px #e3e3e3;"></div>
<div class="r" style="left:480px;top:96px;width:90px;height:18px;background:#f0f0f0;border-style:solid;border-width:1px 1px 0 1px;border-color:#fff #696969 #fff #fff;box-shadow:inset -1px 0 #a0a0a0, inset 1px 1px #e3e3e3;"></div>
<div class="r" style="left:570px;top:96px;width:131px;height:18px;background:#f0f0f0;border-style:solid;border-width:1px 1px 0 1px;border-color:#fff #696969 #fff #fff;box-shadow:inset -1px 0 #a0a0a0, inset 1px 1px #e3e3e3;"></div>
<div class="r" style="left:65px;top:114px;width:718px;height:1px;background:#fff;"></div>
<div class="r" style="left:65px;top:115px;width:718px;height:1px;background:#e3e3e3;"></div>
<div class="r" style="left:1px;top:93px;width:1px;height:473px;background:#fff;"></div>
<div class="t " style="left:9px;top:97.84px;font-size:12px;line-height:12px;font-weight:bold;color:#000;">Account</div>
<div class="t " style="left:69px;top:99.84px;font-size:12px;line-height:12px;font-weight:bold;color:#000;">Ledger</div>
<div class="t " style="left:121.5px;top:99.84px;font-size:12px;line-height:12px;font-weight:bold;color:#000;letter-spacing:0.35px;">Tank(s)</div>
<div class="t " style="left:177px;top:99.84px;font-size:12px;line-height:12px;font-weight:bold;color:#000;letter-spacing:0.2px;">People</div>
<div class="t " style="left:229px;top:99.84px;font-size:12px;line-height:12px;font-weight:bold;color:#000;letter-spacing:0.4px;">Notes*</div>
<div class="t " style="left:280px;top:99.84px;font-size:12px;line-height:12px;font-weight:bold;color:#000;letter-spacing:0.15px;">Misc. Info.</div>
<div class="t " style="left:353px;top:99.84px;font-size:12px;line-height:12px;font-weight:bold;color:#000;letter-spacing:-0.15px;">Pre-Buy</div>
<div class="t " style="left:410px;top:99.84px;font-size:12px;line-height:12px;font-weight:bold;color:#000;">Credit Card</div>
<div class="t " style="left:486px;top:99.84px;font-size:12px;line-height:12px;font-weight:bold;color:#000;">Account Files</div>
<div class="t " style="left:576px;top:99.84px;font-size:12px;line-height:12px;font-weight:bold;color:#000;">Credit Applic.</div>
<div class="r" style="left:4px;top:97px;width:58px;height:16px;border:1px dotted #000;"></div>
<div class="r" style="left:5px;top:118px;width:775px;height:444px;background:#fff;"></div>
<div class="r" style="left:2px;top:117px;width:1px;height:445px;background:#e3e3e3;"></div>
<div class="t " style="left:12.5px;top:128.57px;font-size:13.5px;line-height:13.5px;font-weight:normal;color:#000;letter-spacing:0.95px;-webkit-text-stroke:0.4px #000;">Account #</div>
<div class="t " style="left:86px;top:128.61px;font-size:17px;line-height:17px;font-weight:normal;color:#f00;letter-spacing:0.7px;">10125</div>
<div class="t " style="left:12px;top:155.92px;font-size:19px;line-height:19px;font-weight:bold;color:#000;letter-spacing:0.55px;">Bill To:</div>
<div class="t " style="left:91px;top:160.92px;font-size:19px;line-height:19px;font-weight:normal;color:#000;letter-spacing:0.15px;">WAYNE, BRUCE</div>
<div class="t " style="left:91px;top:182.92px;font-size:19px;line-height:19px;font-weight:normal;color:#000;letter-spacing:0.17px;">1007 MOUNTAIN DRIVE</div>
<div class="t " style="left:91px;top:203.92px;font-size:19px;line-height:19px;font-weight:normal;color:#000;letter-spacing:0.1px;">GOTHAM, NY 10075</div>
<div class="t " style="left:73px;top:258.49px;font-size:19.5px;line-height:19.5px;font-weight:bold;color:#000;letter-spacing:0.6px;">Terms</div>
<div class="t " style="left:73px;top:284.57px;font-size:20px;line-height:20px;font-weight:bold;color:#f00;letter-spacing:0.15px;">DUE UPON RECEIPT</div>
<div class="t " style="left:13px;top:319.61px;font-size:17px;line-height:17px;font-weight:normal;color:#000;letter-spacing:0.8px;">Active:</div>
<div class="t " style="left:76px;top:319.61px;font-size:17px;line-height:17px;font-weight:normal;color:#000;letter-spacing:2.0px;">Yes</div>
<div class="t " style="left:11px;top:352.84px;font-size:12px;line-height:12px;font-weight:normal;color:#0000ff;letter-spacing:0.5px;-webkit-text-stroke:0.35px #0000ff;">TANKS on this account:</div>
<div class="r" style="left:157px;top:342px;width:33px;height:25px;background:#f0f0f0;border-style:solid;border-width:1px 1px 1px 1px;border-color:#fff #696969 #696969 #fff;box-shadow:inset -1px -1px #a0a0a0;"></div>
<svg style="left:165px;top:346px" width="17" height="17" viewBox="0 0 17 17">
<circle cx="8.5" cy="8.5" r="7.6" fill="#0000e0"/>
<path d="M3.2 4 L5 2.6 L8 2.5 L8.5 4 L10 3.2 L12.5 3.5 L12 6 L9.8 6.5 L9.2 8.5 L10.5 9.2 L9.5 11 L8.5 13.5 L7.5 13.5 L7 10.5 L6.5 9 L4 8.2 L3.5 6.5 L5.5 6 L4 5 Z" fill="#808000"/>
<path d="M12.5 11.5 L14 10.5 L14.5 12 L13 13 Z" fill="#808000"/>
</svg>
<div class="t " style="left:410px;top:134.61px;font-size:17px;line-height:17px;font-weight:normal;color:#000;letter-spacing:0.2px;">Phone#</div>
<div class="t " style="left:492px;top:132.76px;font-size:18px;line-height:18px;font-weight:normal;color:#000;letter-spacing:0.9px;">360-555-1234</div>
<div class="t " style="left:410px;top:158.84px;font-size:12px;line-height:12px;font-weight:bold;color:#000;letter-spacing:0.2px;">2nd Phone #</div>
<div class="t " style="left:410px;top:183.84px;font-size:12px;line-height:12px;font-weight:bold;color:#000;letter-spacing:0.55px;">Fax # . . . . . .</div>
<div class="t " style="left:409.5px;top:208.84px;font-size:12px;line-height:12px;font-weight:bold;color:#000;letter-spacing:0.2px;">Account Type Residential</div>
<div class="t " style="left:409.5px;top:233.84px;font-size:12px;line-height:12px;font-weight:bold;color:#000;letter-spacing:0.42px;">Opened . . . . .12-31-2007</div>
<div class="t " style="left:409.5px;top:257.84px;font-size:12px;line-height:12px;font-weight:bold;color:#000;letter-spacing:0.4px;">E-mail. . . . . . .</div>
<div class="t " style="left:409.5px;top:279.84px;font-size:12px;line-height:12px;font-weight:bold;color:#000;">Account Description</div>
<div class="t " style="left:409.5px;top:294.84px;font-size:12px;line-height:12px;font-weight:bold;color:#000;letter-spacing:0.2px;">DOMESTIC</div>
<div class="r" style="left:5px;top:374px;width:775px;height:2px;background:#a0a0a0;"></div>
<div class="r" style="left:5px;top:374px;width:1px;height:188px;background:#a0a0a0;"></div>
<div class="r" style="left:6px;top:376px;width:773px;height:1px;background:#696969;"></div>
<div class="r" style="left:6px;top:376px;width:1px;height:185px;background:#696969;"></div>
<div class="r" style="left:779px;top:376px;width:1px;height:186px;background:#e3e3e3;"></div>
<div class="r" style="left:780px;top:374px;width:1px;height:189px;background:#fff;"></div>
<div class="r" style="left:6px;top:561px;width:774px;height:1px;background:#e3e3e3;"></div>
<div class="r" style="left:5px;top:562px;width:776px;height:1px;background:#fff;"></div>
<div class="r" style="left:7px;top:377px;width:756px;height:21px;background:#000080;"></div>
<div class="r" style="left:7px;top:377px;width:756px;height:1px;background:#fff;"></div>
<div class="r" style="left:7px;top:377px;width:1px;height:40px;background:#fff;"></div>
<div class="r" style="left:7px;top:397px;width:756px;height:1px;background:#000;"></div>
<div class="r" style="left:18px;top:378px;width:1px;height:20px;background:#000;"></div>
<div class="r" style="left:19px;top:378px;width:1px;height:19px;background:#fff;"></div>
<div class="r" style="left:87px;top:378px;width:1px;height:20px;background:#000;"></div>
<div class="r" style="left:88px;top:378px;width:1px;height:19px;background:#fff;"></div>
<div class="r" style="left:220px;top:378px;width:1px;height:20px;background:#000;"></div>
<div class="r" style="left:221px;top:378px;width:1px;height:19px;background:#fff;"></div>
<div class="r" style="left:473px;top:378px;width:1px;height:20px;background:#000;"></div>
<div class="r" style="left:474px;top:378px;width:1px;height:19px;background:#fff;"></div>
<div class="r" style="left:598px;top:378px;width:1px;height:20px;background:#000;"></div>
<div class="r" style="left:599px;top:378px;width:1px;height:19px;background:#fff;"></div>
<div class="r" style="left:699px;top:378px;width:1px;height:20px;background:#000;"></div>
<div class="r" style="left:700px;top:378px;width:1px;height:19px;background:#fff;"></div>
<div class="r" style="left:752px;top:378px;width:1px;height:20px;background:#000;"></div>
<div class="r" style="left:753px;top:378px;width:1px;height:19px;background:#fff;"></div>
<div class="r" style="left:8px;top:398px;width:755px;height:20px;background:#fff;"></div>
<div class="r" style="left:8px;top:399px;width:10px;height:18px;background:#000080;"></div>
<div class="r" style="left:7px;top:398px;width:12px;height:1px;background:#fff;"></div>
<div class="r" style="left:18px;top:398px;width:1px;height:20px;background:#000;"></div>
<div class="r" style="left:7px;top:417px;width:12px;height:1px;background:#000;"></div>
<div class="r" style="left:19px;top:417px;width:744px;height:1px;background:#c8c8c8;"></div>
<div class="r" style="left:87px;top:398px;width:1px;height:19px;background:#c8c8c8;"></div>
<div class="r" style="left:220px;top:398px;width:1px;height:19px;background:#c8c8c8;"></div>
<div class="r" style="left:473px;top:398px;width:1px;height:19px;background:#c8c8c8;"></div>
<div class="r" style="left:598px;top:398px;width:1px;height:19px;background:#c8c8c8;"></div>
<div class="r" style="left:699px;top:398px;width:1px;height:19px;background:#c8c8c8;"></div>
<div class="r" style="left:752px;top:398px;width:1px;height:19px;background:#c8c8c8;"></div>
<svg style="left:10px;top:401px" width="7" height="13" viewBox="0 0 7 13"><path d="M0 0.5 L6.3 6.5 L0 12.5 Z" fill="#ff0"/></svg>
<div class="t " style="left:29.5px;top:380.15px;font-size:14px;line-height:14px;font-weight:normal;color:#fff;letter-spacing:1.0px;-webkit-text-stroke:0.55px #fff;">Size</div>
<div class="t " style="left:89px;top:380.15px;font-size:14px;line-height:14px;font-weight:normal;color:#fff;letter-spacing:1.0px;-webkit-text-stroke:0.55px #fff;">Equipment Type</div>
<div class="t " style="left:222.5px;top:380.15px;font-size:14px;line-height:14px;font-weight:normal;color:#fff;letter-spacing:1.0px;-webkit-text-stroke:0.55px #fff;">Route Name</div>
<div class="t " style="left:475.5px;top:380.15px;font-size:14px;line-height:14px;font-weight:normal;color:#fff;letter-spacing:1.0px;-webkit-text-stroke:0.55px #fff;">Owned By</div>
<div class="t " style="left:600px;top:380.15px;font-size:14px;line-height:14px;font-weight:normal;color:#fff;letter-spacing:1.0px;-webkit-text-stroke:0.55px #fff;">KF or WC</div>
<div class="t " style="left:701px;top:380.15px;font-size:14px;line-height:14px;font-weight:normal;color:#fff;letter-spacing:1.0px;-webkit-text-stroke:0.55px #fff;">loc #</div>
<div class="t " style="left:753.5px;top:380.15px;font-size:14px;line-height:14px;font-weight:normal;color:#fff;letter-spacing:1.0px;-webkit-text-stroke:0.55px #fff;">L</div>
<div class="t " style="left:85px;top:401.15px;font-size:14px;line-height:14px;font-weight:normal;color:#000;letter-spacing:0.6px;transform:translateX(-100%);-webkit-text-stroke:0.35px #000;">250</div>
<div class="t " style="left:90.5px;top:401.15px;font-size:14px;line-height:14px;font-weight:normal;color:#000;letter-spacing:0.6px;-webkit-text-stroke:0.35px #000;">Tank</div>
<div class="t " style="left:223.5px;top:401.15px;font-size:14px;line-height:14px;font-weight:normal;color:#000;letter-spacing:0.75px;-webkit-text-stroke:0.35px #000;">Tue.(BHarbor/J.Pt/Aspenw)</div>
<div class="t " style="left:476px;top:401.15px;font-size:14px;line-height:14px;font-weight:normal;color:#000;letter-spacing:0.7px;-webkit-text-stroke:0.35px #000;">Customer</div>
<div class="t " style="left:600.5px;top:401.15px;font-size:14px;line-height:14px;font-weight:normal;color:#000;letter-spacing:0.7px;-webkit-text-stroke:0.35px #000;">KEEP FULL</div>
<div class="t " style="left:754px;top:401.15px;font-size:14px;line-height:14px;font-weight:normal;color:#000;letter-spacing:0.6px;-webkit-text-stroke:0.35px #000;">0</div>
<div class="r" style="left:763px;top:377px;width:16px;height:168px;background:#f0f0f0;"></div>
<div class="r" style="left:763px;top:394px;width:15px;height:133px;background:#cdcdcd;"></div>
<svg style="left:766px;top:382px" width="9" height="7" viewBox="0 0 9 7"><path d="M1 5.8 L4.5 2.2 L8 5.8" fill="none" stroke="#606060" stroke-width="2"/></svg>
<svg style="left:766px;top:532px" width="9" height="7" viewBox="0 0 9 7"><path d="M1 1.2 L4.5 4.8 L8 1.2" fill="none" stroke="#606060" stroke-width="2"/></svg>
<div class="r" style="left:7px;top:545px;width:772px;height:16px;background:#f0f0f0;"></div>
<div class="r" style="left:24px;top:545px;width:17px;height:15px;background:#cdcdcd;"></div>
<svg style="left:11px;top:548px" width="8" height="9" viewBox="0 0 8 9"><path d="M7 1 L2 4.5 L7 8" fill="none" stroke="#505050" stroke-width="2.1"/></svg>
<svg style="left:749px;top:548px" width="8" height="9" viewBox="0 0 8 9"><path d="M1 1 L6 4.5 L1 8" fill="none" stroke="#505050" stroke-width="2.1"/></svg>
<div class="r" style="left:1px;top:566px;width:784px;height:1px;background:#696969;"></div>
<div class="r" style="left:1px;top:567px;width:784px;height:2px;background:#fff;"></div>
<div class="r" style="left:1px;top:569px;width:783px;height:1px;background:#a0a0a0;"></div>
<div class="r" style="left:1px;top:570px;width:783px;height:22px;background:#f0f0f0;"></div>
<div class="t " style="left:3px;top:574.84px;font-size:12px;line-height:12px;font-weight:normal;color:#000;letter-spacing:0.15px;">Total Tanks=1</div>
<svg style="left:768px;top:576px" width="17" height="16" viewBox="0 0 17 16">
<path d="M4.5 15.2 L16.2 3.5 M9.5 15.2 L16.2 8.5 M14.5 15.2 L16.2 13.5" stroke="#fff" stroke-width="1.3"/>
<path d="M3.5 14.5 L15.5 2.5 M8.5 14.5 L15.5 7.5 M13.5 14.5 L15.5 12.5" stroke="#9a9a9a" stroke-width="1.6" stroke-linecap="round"/>
</svg>
<div class="r" style="left:780px;top:118px;width:1px;height:256px;background:#a0a0a0;"></div>
<div class="r" style="left:783px;top:93px;width:1px;height:473px;background:#a0a0a0;"></div>
<div class="r" style="left:784px;top:93px;width:1px;height:474px;background:#696969;"></div>
<div class="r" style="left:785px;top:32px;width:1px;height:560px;background:#505050;"></div>
<div class="r" style="left:786px;top:0px;width:1px;height:594px;background:#f4f8fd;"></div>
<div class="r" style="left:0px;top:593px;width:786px;height:1px;background:#f4f8fd;"></div>
<div class="r" style="left:655px;top:79px;width:369px;height:270px;background:rgba(255,255,255,0.9);filter:blur(1px);"></div>
<div class="r" style="left:656px;top:79px;width:364px;height:267px;background:rgba(0,0,0,0.6);filter:blur(0.8px);"></div>
<div class="r" style="left:650px;top:75px;width:369px;height:270px;background:#f2f2f2;border:1px solid #c4c4c4;"></div>
<div class="r" style="left:651px;top:76px;width:367px;height:1px;background:#f8f8f8;"></div>
<div class="r" style="left:651px;top:76px;width:1px;height:268px;background:#f8f8f8;"></div>
<div class="r" style="left:652px;top:144px;width:365px;height:22px;background:#91c9f7;"></div>
<div class="t " style="left:684.5px;top:82.66px;font-size:12.8px;line-height:12.8px;font-weight:normal;color:#6d6d6d;transform:scaleX(0.92);transform-origin:0 0;-webkit-text-stroke:0.2px currentColor;">Print Customer Ledger</div>
<div class="t " style="left:684.5px;top:104.66px;font-size:12.8px;line-height:12.8px;font-weight:normal;color:#000;transform:scaleX(0.92);transform-origin:0 0;-webkit-text-stroke:0.2px currentColor;">View Budget Work Sheet</div>
<div class="t " style="left:684.5px;top:126.66px;font-size:12.8px;line-height:12.8px;font-weight:normal;color:#6d6d6d;transform:scaleX(0.92);transform-origin:0 0;-webkit-text-stroke:0.2px currentColor;">Statements</div>
<svg style="left:1002px;top:128.3px" width="6" height="9" viewBox="0 0 6 9"><path d="M1 0.8 L4.6 4.5 L1 8.2" fill="none" stroke="#8a8a8a" stroke-width="1.05"/></svg>
<div class="t " style="left:684.5px;top:148.66px;font-size:12.8px;line-height:12.8px;font-weight:normal;color:#000;transform:scaleX(0.92);transform-origin:0 0;-webkit-text-stroke:0.2px currentColor;">Address/Folder Labels</div>
<svg style="left:1002px;top:150.3px" width="6" height="9" viewBox="0 0 6 9"><path d="M1 0.8 L4.6 4.5 L1 8.2" fill="none" stroke="#303030" stroke-width="1.05"/></svg>
<div class="t " style="left:684.5px;top:170.66px;font-size:12.8px;line-height:12.8px;font-weight:normal;color:#6d6d6d;transform:scaleX(0.92);transform-origin:0 0;-webkit-text-stroke:0.2px currentColor;">Route Cards</div>
<svg style="left:1002px;top:172.3px" width="6" height="9" viewBox="0 0 6 9"><path d="M1 0.8 L4.6 4.5 L1 8.2" fill="none" stroke="#8a8a8a" stroke-width="1.05"/></svg>
<div class="t " style="left:684.5px;top:192.66px;font-size:12.8px;line-height:12.8px;font-weight:normal;color:#6d6d6d;transform:scaleX(0.92);transform-origin:0 0;-webkit-text-stroke:0.2px currentColor;">Delivery Tickets</div>
<svg style="left:1002px;top:194.3px" width="6" height="9" viewBox="0 0 6 9"><path d="M1 0.8 L4.6 4.5 L1 8.2" fill="none" stroke="#8a8a8a" stroke-width="1.05"/></svg>
<div class="t " style="left:684.5px;top:214.66px;font-size:12.8px;line-height:12.8px;font-weight:normal;color:#6d6d6d;transform:scaleX(0.92);transform-origin:0 0;-webkit-text-stroke:0.2px currentColor;">Go to Current Tank in Equipment</div>
<div class="t " style="left:684.5px;top:236.66px;font-size:12.8px;line-height:12.8px;font-weight:normal;color:#6d6d6d;transform:scaleX(0.92);transform-origin:0 0;-webkit-text-stroke:0.2px currentColor;">Go To Current Tank on Route</div>
<div class="t " style="left:684.5px;top:258.66px;font-size:12.8px;line-height:12.8px;font-weight:normal;color:#6d6d6d;transform:scaleX(0.92);transform-origin:0 0;-webkit-text-stroke:0.2px currentColor;">Assign Tank Location</div>
<div class="t " style="left:684.5px;top:280.66px;font-size:12.8px;line-height:12.8px;font-weight:normal;color:#000;transform:scaleX(0.92);transform-origin:0 0;-webkit-text-stroke:0.2px currentColor;">Print Propane Service Agreement(to edit go to TRO6)</div>
<div class="t " style="left:684.5px;top:302.66px;font-size:12.8px;line-height:12.8px;font-weight:normal;color:#6d6d6d;transform:scaleX(0.92);transform-origin:0 0;-webkit-text-stroke:0.2px currentColor;">Print Forms</div>
<svg style="left:1002px;top:304.3px" width="6" height="9" viewBox="0 0 6 9"><path d="M1 0.8 L4.6 4.5 L1 8.2" fill="none" stroke="#8a8a8a" stroke-width="1.05"/></svg>
<div class="t " style="left:684.5px;top:324.66px;font-size:12.8px;line-height:12.8px;font-weight:normal;color:#000;transform:scaleX(0.92);transform-origin:0 0;-webkit-text-stroke:0.2px currentColor;">New Service Order</div>
<div class="r" style="left:1018px;top:145px;width:319px;height:51px;background:rgba(255,255,255,0.9);filter:blur(1px);"></div>
<div class="r" style="left:1019px;top:145px;width:314px;height:48px;background:rgba(0,0,0,0.6);filter:blur(0.8px);"></div>
<div class="r" style="left:1013px;top:141px;width:319px;height:51px;background:#f2f2f2;border:1px solid #c4c4c4;"></div>
<div class="r" style="left:1014px;top:142px;width:317px;height:1px;background:#f8f8f8;"></div>
<div class="r" style="left:1014px;top:142px;width:1px;height:49px;background:#f8f8f8;"></div>
<div class="r" style="left:1016px;top:144px;width:314px;height:22px;background:#91c9f7;"></div>
<div class="t " style="left:1047.5px;top:148.66px;font-size:12.8px;line-height:12.8px;font-weight:normal;color:#000;transform:scaleX(0.92);transform-origin:0 0;-webkit-text-stroke:0.2px currentColor;">Print Single Laser Label for this Account</div>
<div class="t " style="left:1047.5px;top:170.66px;font-size:12.8px;line-height:12.8px;font-weight:normal;color:#000;transform:scaleX(0.92);transform-origin:0 0;-webkit-text-stroke:0.2px currentColor;">Print a Single Folder Label For This Account</div>
</body></html>
